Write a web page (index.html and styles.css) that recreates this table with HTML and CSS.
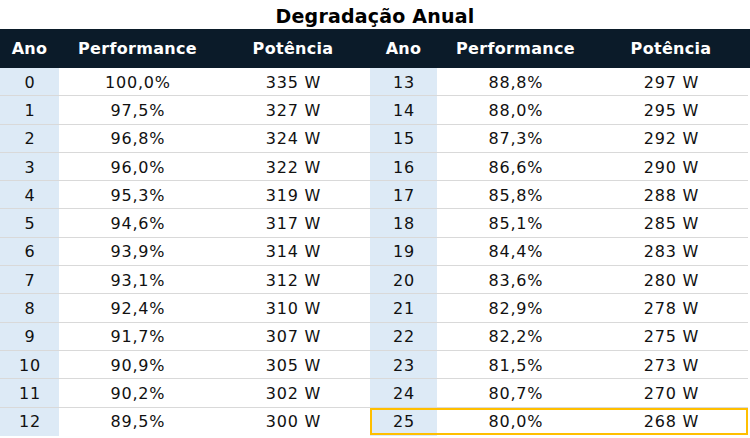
FILE: index.html
```html
<!DOCTYPE html>
<html lang="pt">
<head>
<meta charset="utf-8">
<link rel="stylesheet" href="styles.css">
</head>
<body>
<div class="page">
  <h1 class="title">Degradação Anual</h1>
  <table class="deg">
    <colgroup>
      <col class="c-ano-l"><col class="c-perf"><col class="c-pot">
      <col class="c-ano-r"><col class="c-perf"><col class="c-pot-r">
    </colgroup>
    <thead>
      <tr><th>Ano</th><th>Performance</th><th>Potência</th><th>Ano</th><th>Performance</th><th>Potência</th></tr>
    </thead>
    <tbody>
      <tr><td class="ano">0</td><td>100,0%</td><td>335 W</td><td class="ano">13</td><td>88,8%</td><td>297 W</td></tr>
      <tr><td class="ano">1</td><td>97,5%</td><td>327 W</td><td class="ano">14</td><td>88,0%</td><td>295 W</td></tr>
      <tr><td class="ano">2</td><td>96,8%</td><td>324 W</td><td class="ano">15</td><td>87,3%</td><td>292 W</td></tr>
      <tr><td class="ano">3</td><td>96,0%</td><td>322 W</td><td class="ano">16</td><td>86,6%</td><td>290 W</td></tr>
      <tr><td class="ano">4</td><td>95,3%</td><td>319 W</td><td class="ano">17</td><td>85,8%</td><td>288 W</td></tr>
      <tr><td class="ano">5</td><td>94,6%</td><td>317 W</td><td class="ano">18</td><td>85,1%</td><td>285 W</td></tr>
      <tr><td class="ano">6</td><td>93,9%</td><td>314 W</td><td class="ano">19</td><td>84,4%</td><td>283 W</td></tr>
      <tr><td class="ano">7</td><td>93,1%</td><td>312 W</td><td class="ano">20</td><td>83,6%</td><td>280 W</td></tr>
      <tr><td class="ano">8</td><td>92,4%</td><td>310 W</td><td class="ano">21</td><td>82,9%</td><td>278 W</td></tr>
      <tr><td class="ano">9</td><td>91,7%</td><td>307 W</td><td class="ano">22</td><td>82,2%</td><td>275 W</td></tr>
      <tr><td class="ano">10</td><td>90,9%</td><td>305 W</td><td class="ano">23</td><td>81,5%</td><td>273 W</td></tr>
      <tr><td class="ano">11</td><td>90,2%</td><td>302 W</td><td class="ano">24</td><td>80,7%</td><td>270 W</td></tr>
      <tr class="last"><td class="ano">12</td><td>89,5%</td><td>300 W</td><td class="ano hl hl-l">25</td><td class="hl">80,0%</td><td class="hl hl-r">268 W</td></tr>
    </tbody>
  </table>
</div>
</body>
</html>
```

FILE: styles.css
```css
html, body {
  margin: 0;
  padding: 0;
  background: #ffffff;
}

.page {
  width: 750px;
  height: 438px;
  overflow: hidden;
  font-family: "DejaVu Sans", "Lato", sans-serif;
  color: #111111;
}

.title {
  margin: 0;
  height: 29px;
  line-height: 32px;
  text-align: center;
  font-size: 19px;
  font-weight: 700;
  letter-spacing: 0.2px;
  color: #000000;
}

.deg {
  width: 748px;
  border-collapse: separate;
  border-spacing: 0;
  table-layout: fixed;
}

.c-ano-l { width: 59px; }
.c-ano-r { width: 67px; }
.c-perf { width: 157px; }
.c-pot { width: 154px; }
.c-pot-r { width: 154px; }

.deg th {
  height: 39px;
  padding: 0;
  box-sizing: border-box;
  background: #0b1b29;
  color: #ffffff;
  font-size: 16px;
  font-weight: 700;
  letter-spacing: 0.3px;
  text-align: center;
}

.deg thead th:last-child {
  box-shadow: 2px 0 0 #0b1b29;
}

.deg td {
  height: 28.3px;
  box-sizing: border-box;
  padding: 1px 0 0 0;
  text-align: center;
  font-size: 16px;
  letter-spacing: 0.8px;
  text-indent: 0.8px;
  border-bottom: 1px solid #d9d9d9;
  color: #111111;
}

.deg td.ano {
  background: #ddeaf6;
}

.deg tr.last td {
  border-bottom: 1px solid transparent;
}

.deg td.hl {
  box-shadow: inset 0 2px 0 #ffbf00, inset 0 -2px 0 #ffbf00;
}

.deg td.hl-l {
  box-shadow: inset 0 2px 0 #ffbf00, inset 0 -2px 0 #ffbf00, inset 2px 0 0 #ffbf00;
}

.deg td.hl-r {
  box-shadow: inset 0 2px 0 #ffbf00, inset 0 -2px 0 #ffbf00, inset -2px 0 0 #ffbf00;
}
```
